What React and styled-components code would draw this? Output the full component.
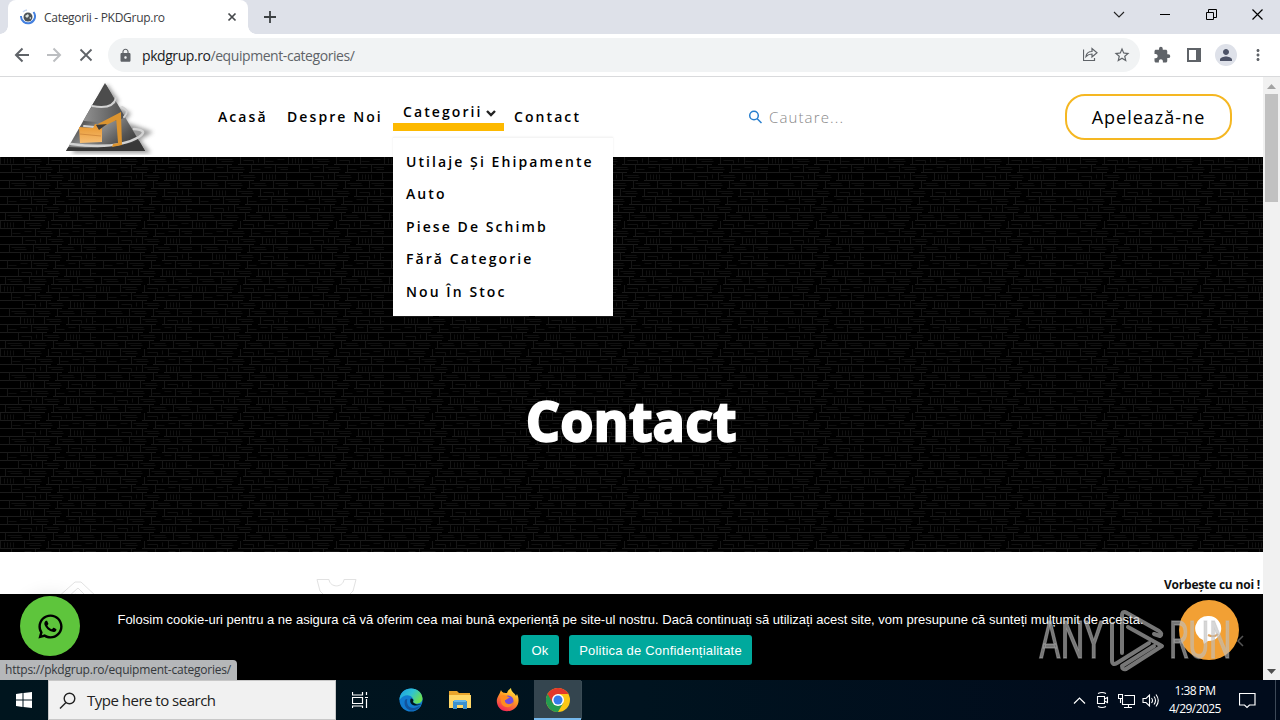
import React from 'react'
import { styled, createGlobalStyle } from 'styled-components'
import { RiWhatsappLine } from 'react-icons/ri'
import { MdLock, MdExtension, MdPerson, MdStarBorder, MdMoreVert } from 'react-icons/md'

const GlobalStyle = createGlobalStyle`
*{
  padding: 0;
  margin: 0;
  box-sizing: border-box;
}
body{
  background-color: #fff;
  font-family: 'Open Sans', 'Noto Sans', sans-serif;
  overflow: hidden;
}
svg{
  display: block;
  flex-shrink: 0;
}
`
const Screen = styled.div`
width: 1280px;
height: 720px;
display: flex;
flex-direction: column;
overflow: hidden;
`

/* browser */
const TabBar = styled.div`
height: 34px;
display: flex;
align-items: stretch;
background-color: #dee1e9;
padding-left: 8px;
`
const Tab = styled.div`
position: relative;
width: 240px;
display: flex;
align-items: center;
padding: 0 10px 0 12px;
background-color: #fff;
border-radius: 8px 8px 0 0;
&::before, &::after{
  content: '';
  position: absolute;
  bottom: 0;
  width: 8px;
  height: 8px;
}
&::before{
  left: -8px;
  background: radial-gradient(circle at 0 0, transparent 7.5px, #fff 8px);
}
&::after{
  right: -8px;
  background: radial-gradient(circle at 100% 0, transparent 7.5px, #fff 8px);
}
`
const TabTitle = styled.span`
flex: 1;
margin-left: 8px;
font-size: 12px;
letter-spacing: -0.28px;
color: #3c4043;
white-space: nowrap;
`
const NewTab = styled.div`
display: flex;
align-items: center;
margin-left: 16px;
`
const WindowButtons = styled.div`
margin-left: auto;
display: flex;
align-items: center;
height: 28px;
`
const WindowButton = styled.div`
width: 46px;
display: flex;
justify-content: center;
`
const Toolbar = styled.div`
height: 43px;
display: flex;
align-items: center;
padding: 0 6px 0 14px;
border-bottom: 1px solid #d9dadc;
background-color: #fff;
`
const NavIcons = styled.div`
display: flex;
gap: 16px;
width: 94px;
`
const AddressBar = styled.div`
width: 1032px;
height: 34px;
display: flex;
align-items: center;
padding: 0 9px 0 10px;
border-radius: 17px;
background-color: #f1f3f4;
color: #5f6368;
`
const Url = styled.span`
flex: 1;
margin-left: 9px;
font-size: 14px;
letter-spacing: -0.43px;
color: #5f6368;
b{
  font-weight: 400;
  color: #202124;
}
`
const AddressIcons = styled.div`
display: flex;
gap: 14px;
`
const Extensions = styled.div`
display: grid;
grid-template-columns: repeat(4, 32px);
align-items: center;
justify-items: center;
margin-left: 6px;
color: #5f6368;
`
const Avatar = styled.div`
width: 22px;
height: 22px;
display: flex;
align-items: center;
justify-content: center;
border-radius: 50%;
background-color: #dee1e9;
color: #4d5367;
`

/* web page */
const Viewport = styled.div`
position: relative;
height: 603px;
display: flex;
`
const Page = styled.div`
width: 1263px;
height: 603px;
overflow: hidden;
`
const Scrollbar = styled.div`
width: 17px;
display: flex;
flex-direction: column;
align-items: center;
background-color: #f1f1f1;
padding: 7px 0 6px;
`
const Thumb = styled.div`
width: 13px;
height: 108px;
margin: 5px 0 auto;
background-color: #c1c1c1;
`
const Header = styled.header`
height: 80px;
display: flex;
align-items: center;
background-color: #fff;
`
const Logo = styled.div`
width: 208px;
padding-left: 60px;
`
const Menu = styled.nav`
display: flex;
align-items: center;
width: 540px;
height: 80px;
`
const MenuItem = styled.div`
width: ${({ $width }) => $width}px;
padding-left: 10px;
display: flex;
font-size: 14px;
font-weight: 600;
line-height: 22px;
letter-spacing: 2.08px;
color: #000;
white-space: nowrap;
svg{
  margin: 9px 0 0 4px;
}
`
const ActiveItem = styled(MenuItem)`
position: relative;
align-self: flex-start;
height: 34px;
margin-top: 20px;
padding-top: 4px;
border-bottom: 8px solid #fdb900;
`
const Dropdown = styled.div`
position: absolute;
left: 0;
top: 40px;
width: 220px;
height: 179px;
padding: 8px 13px;
background-color: #fff;
border-top: 1px solid #f4f4f4;
box-shadow: 0 0 2px rgba(0,0,0,0.08);
z-index: 2;
`
const DropdownItem = styled.div`
height: 32.4px;
line-height: 32px;
`
const Search = styled.div`
display: flex;
align-items: center;
gap: 6px;
width: 317px;
font-size: 15px;
font-weight: 300;
letter-spacing: 1.12px;
color: #888;
`
const CallButton = styled.button`
width: 167px;
height: 46px;
border: 2px solid #f5b722;
border-radius: 20px;
background-color: #fff;
font-family: inherit;
font-size: 18px;
letter-spacing: 1px;
color: #000;
`
const Hero = styled.section`
position: relative;
height: 395px;
display: flex;
justify-content: center;
padding-top: 224px;
background-color: #000;
`
const Texture = styled.svg`
position: absolute;
left: 0;
top: 0;
width: 100%;
height: 100%;
`
const HeroTitle = styled.h1`
position: relative;
height: 80px;
font-size: 53px;
line-height: 80px;
font-weight: 700;
letter-spacing: 0.6px;
-webkit-text-stroke: 2.4px #fff;
color: #fff;
`
const Content = styled.section`
height: 128px;
display: flex;
justify-content: space-between;
padding: 26px 3px 0 52px;
`
const Outlines = styled.div`
display: flex;
gap: 208px;
`
const Talk = styled.p`
font-size: 12px;
font-weight: 700;
line-height: 14px;
letter-spacing: -0.2px;
color: #111;
white-space: nowrap;
`
const CookieBar = styled.div`
position: absolute;
left: 0;
bottom: 0;
width: 1263px;
height: 86px;
display: flex;
flex-direction: column;
align-items: center;
background-color: #000;
font-family: 'Liberation Sans', sans-serif;
font-size: 13px;
color: #fff;
padding-top: 17px;
`
const CookieText = styled.p`
line-height: 18px;
white-space: nowrap;
padding-right: 2px;
`
const CookieButtons = styled.div`
display: flex;
gap: 10px;
margin: 6px 0 0 10px;
`
const CookieButton = styled.button`
width: ${({ $width }) => $width}px;
height: 30px;
border: none;
border-radius: 3px;
background-color: #00a99d;
font-family: inherit;
font-size: 13px;
letter-spacing: 0.2px;
white-space: nowrap;
color: #fff;
`
const FloatButton = styled.div`
position: absolute;
left: ${({ $left }) => $left}px;
bottom: ${({ $bottom }) => $bottom}px;
width: 60px;
height: 60px;
display: flex;
align-items: center;
justify-content: center;
border-radius: 50%;
background-color: ${({ $color }) => $color};
box-shadow: 0 0 20px rgba(0,0,0,0.12);
`
const StatusBubble = styled.div`
position: absolute;
left: 0;
bottom: 0;
width: 237px;
height: 20px;
padding-left: 5px;
border-radius: 0 4px 0 0;
background-color: #b5b7b9;
font-size: 12px;
line-height: 20px;
letter-spacing: -0.22px;
color: #34383c;
white-space: nowrap;
`
const Watermark = styled.div`
position: absolute;
left: 1039px;
bottom: 7px;
width: 206px;
height: 64px;
display: flex;
align-items: center;
color: rgba(190,190,190,0.62);
font-family: 'Roboto', sans-serif;
font-size: 51px;
line-height: 64px;
`
const WatermarkText = styled.span`
width: ${({ $width }) => $width}px;
white-space: nowrap;
-webkit-text-stroke: 1.4px rgba(190,190,190,0.4);
span{
  display: inline-block;
  transform: scaleX(${({ $scale }) => $scale});
  transform-origin: 0 50%;
}
`

/* windows taskbar */
const Taskbar = styled.div`
height: 40px;
display: flex;
background: linear-gradient(90deg, #00151e 0, #00131f 50%, #010c1c 85%);
color: #fff;
`
const Task = styled.div`
width: ${({ $width }) => $width || 49}px;
display: flex;
align-items: center;
justify-content: center;
background-color: ${({ $active }) => ($active ? '#34454f' : 'transparent')};
box-shadow: ${({ $active }) => ($active ? 'inset 0 -2px 0 #76b9ed, 2px 0 0 -1px #3a4b55' : 'none')};
`
const TaskSearch = styled.div`
width: 288px;
display: flex;
align-items: center;
gap: 11px;
padding-left: 10px;
background-color: #f1f1f1;
border: 1px solid #c8c8c8;
font-size: 15px;
letter-spacing: -0.5px;
color: #222;
`
const Tray = styled.div`
margin-left: auto;
display: flex;
align-items: center;
padding-right: 4px;
`
const TrayIcons = styled.div`
display: flex;
align-items: center;
gap: 7px;
margin-right: 1px;
`
const Clock = styled.div`
width: 70px;
text-align: center;
font-size: 12px;
line-height: 18px;
letter-spacing: -0.55px;
`
const TrayEnd = styled.div`
height: 40px;
width: 46px;
display: flex;
align-items: center;
padding-left: 9px;
border-right: 1px solid #3d4957;
`

const Line = ({ d, size = 16, color = '#5f6368', width = 1.5 }) => (
  <svg width={size} height={size} viewBox={`0 0 ${size} ${size}`} fill='none' stroke={color} strokeWidth={width}>
    <path d={d} />
  </svg>
)

const LogoImage = () => (
  <svg width='98' height='76' viewBox='60 79 98 76'>
    <defs>
      <linearGradient id='metal' x1='0' y1='0' x2='1' y2='1'>
        <stop offset='0' stopColor='#555' />
        <stop offset='.35' stopColor='#444' />
        <stop offset='.55' stopColor='#909090' />
        <stop offset='.75' stopColor='#555' />
        <stop offset='1' stopColor='#222' />
      </linearGradient>
      <linearGradient id='band' x1='0' y1='0' x2='1' y2='0'>
        <stop offset='0' stopColor='#9a9a9a' />
        <stop offset='1' stopColor='#4a4a4a' />
      </linearGradient>
      <linearGradient id='digger' x1='0' y1='0' x2='0' y2='1'>
        <stop offset='0' stopColor='#e7952c' />
        <stop offset='1' stopColor='#f6bd72' />
      </linearGradient>
      <filter id='soft' x='-20%' y='-20%' width='140%' height='140%'>
        <feGaussianBlur stdDeviation='2' />
      </filter>
      <clipPath id='tri'>
        <path d='M105 83 L66 151 L145 151 Z' />
      </clipPath>
    </defs>
    <path d='M107 84 L119 101 L115 105 L131 113 L125 122 L153 132 L140 140 L151 153 L72 153 Z' fill='#777' opacity='.75' filter='url(#soft)' />
    <path d='M105 83 L66 151 L145 151 Z' fill='url(#metal)' />
    <g clipPath='url(#tri)'>
      <path d='M90 107 Q112 110 119 97 L108 82 Z' fill='#4c4c4c' />
      <path d='M78 122 Q84 108 92 107 Q112 110 119 100 L128 114 Q120 125 84 121 Z' fill='url(#band)' />
      <path d='M64 147 Q120 150 150 137 L150 155 L64 155 Z' fill='#383838' />
    </g>
    <g fill='none' stroke='#d2d2d2' strokeLinecap='round'>
      <path d='M92 106 Q113 110 116 98' strokeWidth='2' />
      <path d='M84 126 L94 127 M124 117 Q127 114 127 111 Q126 109 122 107' strokeWidth='2' />
      <path d='M71 144 Q117 150 139 137 Q149 130 134 129' strokeWidth='2.6' />
    </g>
    <path d='M79 127 L93 128 L95 124 L102 126 L102 142 L80 143 Z' fill='url(#digger)' />
    <path d='M80 134 L101 136' stroke='#c98035' strokeWidth='.7' fill='none' />
    <path d='M100 128 L98 124 L121 112 L121 118 L104 126 Z M116 116 L121 115 L122 145 L112 147 L113 144 L118 143 Z' fill='#dc942f' />
    <path d='M96 125 L107 124 L99 130 Z' fill='#403b37' />
  </svg>
)

const EdgeIcon = () => (
  <svg width='24' height='24' viewBox='0 0 26 26'>
    <defs>
      <linearGradient id='edgeTop' x1='0' y1='0' x2='1' y2='.5'>
        <stop offset='0' stopColor='#1b9de2' />
        <stop offset='.55' stopColor='#30c3d2' />
        <stop offset='1' stopColor='#69df55' />
      </linearGradient>
    </defs>
    <circle cx='13' cy='13' r='12.5' fill='#117bd0' />
    <path d='M.5 13 C1-4 25.5-3 25.5 12 C25 17 19 18 16 16 C14 15 17 14 15 11 C12 6 4 7 .5 13Z' fill='url(#edgeTop)' />
    <path d='M9 12 C7 20 14 25 23 19 C18 28 6 25 6 16 C6 13 7 12 9 12Z' fill='#12549e' />
    <path d='M13 11 C10 16 15 21 23 18 L24 17 C20 19 16 17 15 15 C16 14 16 12 13 11Z' fill='#00151e' />
  </svg>
)

const FolderIcon = () => (
  <svg width='22' height='20' viewBox='0 0 22 20'>
    <path d='M0 1h8l2 2h11v4H0z' fill='#e9a52c' />
    <path d='M0 5h22v13H0z' fill='#ffd767' />
    <path d='M4 19v-8h14v8h-4v-4H8v4z' fill='#3b91cf' />
    <path d='M5 10h12v2H5z' fill='#65b7ea' />
  </svg>
)

const FirefoxIcon = () => (
  <svg width='24' height='24' viewBox='0 0 24 24'>
    <defs>
      <linearGradient id='fox' x1='.8' y1='0' x2='.3' y2='1'>
        <stop offset='0' stopColor='#fff04a' />
        <stop offset='.45' stopColor='#ff9b23' />
        <stop offset='1' stopColor='#f32357' />
      </linearGradient>
    </defs>
    <path d='M5 2 C6 5 9 5 11 5 C12 2 14 1 15 0 C15 4 19 5 20 8 L21 6 C29 23 4 30 1 15 C0 10 3 8 5 2Z' fill='url(#fox)' />
    <circle cx='12' cy='13' r='5.5' fill='#704be0' />
    <path d='M4 8 C8 6 12 8 14 10 C11 10 11 12 9 12 C8 16 14 18 17 14 C17 21 5 21 5 13Z' fill='#ff8b20' />
  </svg>
)

const ChromeIcon = () => (
  <svg width='24' height='24' viewBox='0 0 24 24'>
    <circle cx='12' cy='12' r='12' fill='#fbc716' />
    <path d='M12 12 L1.6 6 A12 12 0 0 0 12 24 L17.2 15Z' fill='#249b50' />
    <path d='M1.6 6 A12 12 0 0 1 22.4 6 H12 L6.8 15Z' fill='#e3372b' />
    <circle cx='12' cy='12' r='6' fill='#fff' />
    <circle cx='12' cy='12' r='4.5' fill='#347bea' />
  </svg>
)

// brick wall: rows 8px high with broken joints and a finer grain inside every brick
const bricks = () => {
  const marks = []
  for (let row = 0; row < 8; row++) {
    const y = row * 8 + 7.5
    const shift = (row * 11) % 24
    marks.push({ d: `M0 ${y} H${40 + shift} M${46 + shift} ${y} H96`, c: '#1b1b1b' })
    for (let col = 0; col < 4; col++) {
      const x = col * 24 + shift + 0.5
      const kind = (row * 7 + col * 5 + row * col) % 4
      marks.push({ d: `M${x} ${y - 8} V${y}`, c: '#161616' })
      if (kind === 0) marks.push({ d: `M${x + 4} ${y - 6} v5 m3 -5 v5 m3 -5 v5 m3 -5 v5`, c: '#111' })
      if (kind === 1) marks.push({ d: `M${x + 2} ${y - 5} h14 M${x + 5} ${y - 3} h12`, c: '#111' })
      if (kind === 2) marks.push({ d: `M${x + 3} ${y - 4} h10 v3 m5 -5 v4`, c: '#121212' })
      if (kind === 3) marks.push({ d: `M${x + 1} ${y - 3} h8 m4 -2 h7`, c: '#101010' })
    }
  }
  return marks
}

const BrickWall = () => (
  <Texture>
    <defs>
      <pattern id='bricks' width='96' height='64' patternUnits='userSpaceOnUse'>
        {bricks().map(({ d, c }, i) => <path key={i} d={d} stroke={c} fill='none' />)}
      </pattern>
    </defs>
    <rect width='100%' height='100%' fill='url(#bricks)' />
  </Texture>
)

const items = ['Utilaje Și Ehipamente', 'Auto', 'Piese De Schimb', 'Fără Categorie', 'Nou În Stoc']

const Browser = () => (
  <>
    <TabBar>
      <Tab>
        <svg width='16' height='16' viewBox='0 0 16 16' fill='none'>
          <path d='M13.5 3 A7 7 0 1 1 1 7' stroke='#4480df' strokeWidth='2' />
          <path d='M3 3 A7 7 0 0 1 7 1' stroke='#c6d6f2' strokeWidth='1.5' />
          <circle cx='8' cy='8' r='4.5' fill='#4d5358' />
          <path d='M5 7 l3-2 1 2-2 2z M9 9l2-1v2z' fill='#d9e2df' />
        </svg>
        <TabTitle>Categorii - PKDGrup.ro</TabTitle>
        <Line size={12} color='#45484b' width={1.7} d='M2.5 2.5 L9.5 9.5 M9.5 2.5 L2.5 9.5' />
      </Tab>
      <NewTab>
        <Line size={12} color='#3c4043' width={1.8} d='M6 0 V12 M0 6 H12' />
      </NewTab>
      <WindowButtons>
        <WindowButton><Line size={12} color='#222' width={1.1} d='M1 4 L6 9 L11 4' /></WindowButton>
        <WindowButton><Line size={10} color='#000' width={1} d='M0 5.5 H10' /></WindowButton>
        <WindowButton><Line size={11} color='#000' width={1} d='M.5 3.5 H7.5 V10.5 H.5Z M2.5 3.5 V.5 H10.5 V8.5 H7.5' /></WindowButton>
        <WindowButton><Line size={11} color='#000' width={1.2} d='M.5 .5 L10.5 10.5 M10.5 .5 L.5 10.5' /></WindowButton>
      </WindowButtons>
    </TabBar>
    <Toolbar>
      <NavIcons>
        <Line width={2} d='M15 8 H2 M8.5 1.5 L2 8 L8.5 14.5' />
        <Line width={2} color='#bcbec1' d='M1 8 H14 M7.5 1.5 L14 8 L7.5 14.5' />
        <Line width={1.8} d='M2.5 2.5 L13.5 13.5 M13.5 2.5 L2.5 13.5' />
      </NavIcons>
      <AddressBar>
        <MdLock size={15} />
        <Url><b>pkdgrup.ro</b>/equipment-categories/</Url>
        <AddressIcons>
          <Line width={1.2} d='M.5 3.5 V14.5 H11.5 V12 M3 10.5 C3.5 7 5.5 5.5 9 5.5 V2.5 L14 6.8 L9 11 V8 C6 8 4.5 9 3 10.5Z' />
          <MdStarBorder size={18} />
        </AddressIcons>
      </AddressBar>
      <Extensions>
        <MdExtension size={18} />
        <svg width='14' height='14' viewBox='0 0 14 14' fill='#5f6368'>
          <path d='M0 0h14v14H0z M2 2v10h7V2z' fillRule='evenodd' />
        </svg>
        <Avatar><MdPerson size={18} /></Avatar>
        <MdMoreVert size={18} />
      </Extensions>
    </Toolbar>
  </>
)

const App = () => {
  return (
    <Screen>
      <GlobalStyle />
      <Browser />
      <Viewport>
        <Page>
          <Header>
            <Logo><LogoImage /></Logo>
            <Menu>
              <MenuItem $width={69}>Acasă</MenuItem>
              <MenuItem $width={116}>Despre Noi</MenuItem>
              <ActiveItem $width={111}>
                Categorii
                <svg width='10' height='7' viewBox='0 0 10 7' fill='none' stroke='#222' strokeWidth='2.4'>
                  <path d='M1 1 L5 5 L9 1' />
                </svg>
                <Dropdown>
                  {items.map((item) => <DropdownItem key={item}>{item}</DropdownItem>)}
                </Dropdown>
              </ActiveItem>
              <MenuItem $width={90}>Contact</MenuItem>
            </Menu>
            <Search>
              <svg width='15' height='15' viewBox='0 0 15 15' fill='none' stroke='#287fce' strokeWidth='1.5'>
                <circle cx='6' cy='5.5' r='4.3' />
                <path d='M9 8.5 L13.5 13' />
              </svg>
              Cautare...
            </Search>
            <CallButton>Apelează-ne</CallButton>
          </Header>
          <Hero>
            <BrickWall />
            <HeroTitle>Contact</HeroTitle>
          </Hero>
          <Content>
            <Outlines>
              <svg width='56' height='20' viewBox='0 0 56 20' fill='none' stroke='#e2e2e2'>
                <path d='M5 20 L23 4 H29 L46 20 M16 19 L26 10 L35 19 M23 16 L30 20' />
              </svg>
              <svg width='42' height='20' viewBox='0 0 42 20' fill='none' stroke='#e2e2e2'>
                <path d='M1 1.5 H13 C14 10 27 10 28 1.5 H40 L37 13 L33 17 M1 1.5 L4 13 L8 17' />
              </svg>
            </Outlines>
            <Talk>Vorbește cu noi !</Talk>
          </Content>
        </Page>
        <Scrollbar>
          <svg width='9' height='5' viewBox='0 0 9 5'><path d='M0 5 L4.5 0 L9 5Z' fill='#a3a3a3' /></svg>
          <Thumb />
          <svg width='9' height='5' viewBox='0 0 9 5'><path d='M0 0 L4.5 5 L9 0Z' fill='#505050' /></svg>
        </Scrollbar>
        <CookieBar>
          <CookieText>Folosim cookie-uri pentru a ne asigura că vă oferim cea mai bună experiență pe site-ul nostru. Dacă continuați să utilizați acest site, vom presupune că sunteți mulțumit de acesta.</CookieText>
          <CookieButtons>
            <CookieButton $width={38}>Ok</CookieButton>
            <CookieButton $width={183}>Politica de Confidențialitate</CookieButton>
          </CookieButtons>
        </CookieBar>
        <FloatButton $left={20} $bottom={24} $color='#5ec53c'>
          <RiWhatsappLine size={29} color='#000' />
        </FloatButton>
        <FloatButton $left={1179} $bottom={20} $color='#f2a034'>
          <svg width='28' height='30' viewBox='0 0 28 30'>
            <path d='M14 1 A12.7 12.5 0 1 1 13 26 L9 29 L8 25 A12.7 12.5 0 0 1 14 1Z' fill='#fff' />
            <path d='M13 20 Q19 23 23 19' stroke='#dda463' strokeWidth='2' fill='none' />
          </svg>
        </FloatButton>
        <Watermark>
          <WatermarkText $width={69} $scale={0.65}><span>ANY</span></WatermarkText>
          <svg width='61' height='64' viewBox='-2 -1 61 64' fill='none' stroke='currentColor' strokeWidth='4' strokeLinecap='round' strokeLinejoin='round'>
            <path d='M2 14 V50 Q2 56 7 53 L39 33 M12 43 V6 Q12 0 17 3 L49 21 Q53 24 50 26 L44 24 M18 17 L52 36 L16 59 Q12 60 12 56 L44 36' />
          </svg>
          <WatermarkText $width={65} $scale={0.62}><span>RUN</span></WatermarkText>
          <svg width='10' height='12' viewBox='0 0 10 12' fill='none' stroke='#555' strokeWidth='1.5'>
            <path d='M9 1 L4 6 L9 11' />
          </svg>
        </Watermark>
        <StatusBubble>https://pkdgrup.ro/equipment-categories/</StatusBubble>
      </Viewport>
      <Taskbar>
        <Task $width={48}>
          <svg width='16' height='16' viewBox='0 0 16 16' fill='#fff'>
            <path d='M0 2 L6.5 1 V7.5 H0Z M7.5 .9 L16 0 V7.5 H7.5Z M0 8.5 H6.5 V15 L0 14Z M7.5 8.5 H16 V16 L7.5 15.1Z' />
          </svg>
        </Task>
        <TaskSearch>
          <svg width='17' height='17' viewBox='0 0 17 17' fill='none' stroke='#222' strokeWidth='1.4'>
            <circle cx='10.5' cy='6.5' r='5.3' />
            <path d='M7 10.5 L1 16.5' />
          </svg>
          Type here to search
        </TaskSearch>
        <Task $width={48}>
          <Line size={16} color='#fff' width={1.2} d='M.5 0 V3 H10.5 V0 M.5 5.5 H10.5 V11.5 H.5Z M.5 16 V14 H10.5 V16 M14.5 0 V3 M14.5 7 V16 M13 5.5 H16' />
        </Task>
        <Task $width={54}><EdgeIcon /></Task>
        <Task $width={44}><FolderIcon /></Task>
        <Task $width={52}><FirefoxIcon /></Task>
        <Task $width={47} $active><ChromeIcon /></Task>
        <Tray>
          <TrayIcons>
            <Line size={13} color='#fff' width={1.2} d='M1 9.5 L6.5 4 L12 9.5' />
            <Line size={18} color='#fff' width={1.1} d='M5 2.5 Q9 .5 13 2.5 M5 15.5 Q9 17.5 13 15.5 M4.5 5.5 H11.5 V12.5 H4.5Z M11.5 8 L14.5 6.5 V11.5 L11.5 10' />
            <Line size={17} color='#fff' width={1.1} d='M6.5 3.5 H16.5 V12.5 H4.5 V7 M.5 2.5 H4.5 V6.5 H.5Z M2.5 6.5 V11 M10.5 12.5 V15.5 M6 15.5 H14' />
            <Line size={17} color='#fff' width={1.1} d='M1 6.5 H4 L7.5 3 V14 L4 10.5 H1Z M9.5 6 Q11.5 8.5 9.5 11 M12 4.5 Q15 8.5 12 12.5 M14 2.5 Q18.5 8.5 14 14.5' />
          </TrayIcons>
          <Clock>1:38 PM<br />4/29/2025</Clock>
          <TrayEnd>
            <Line size={17} color='#fff' width={1.2} d='M.5 1.5 H16 V13 H10.5 L8 15.5 L5.5 13 H.5Z' />
          </TrayEnd>
        </Tray>
      </Taskbar>
    </Screen>
  )
}

export default App
